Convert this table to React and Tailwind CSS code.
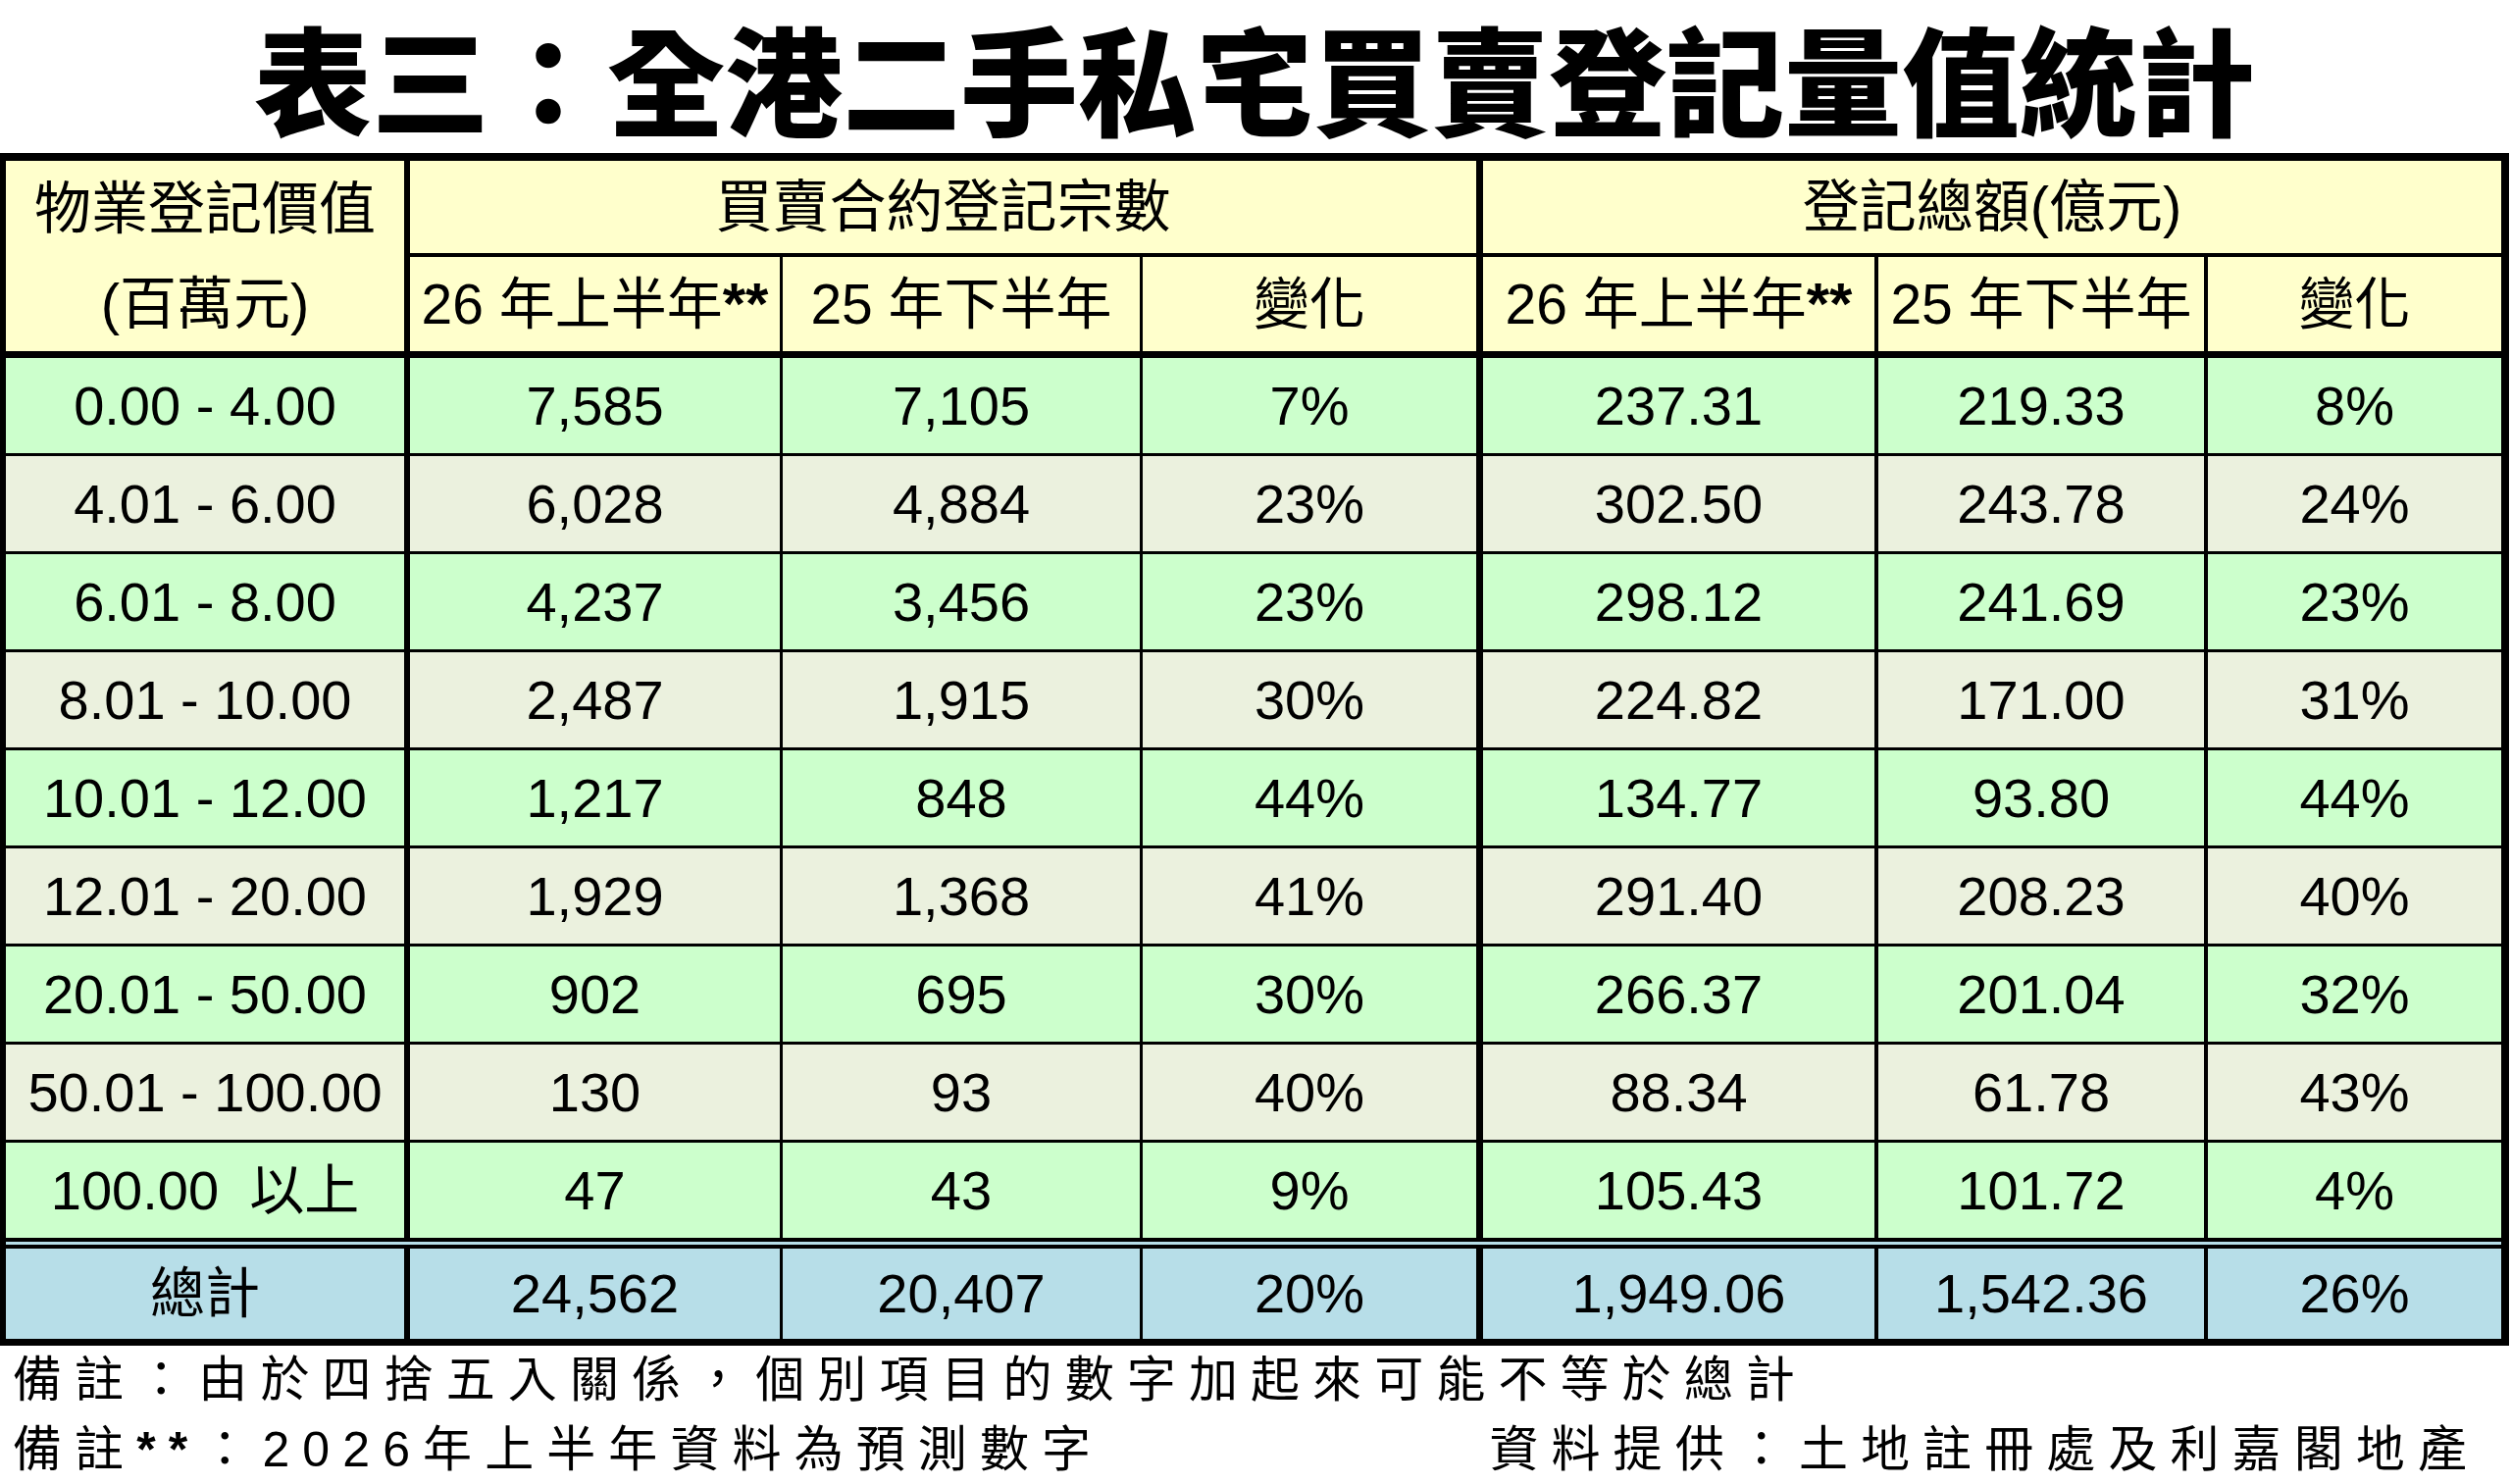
import React from 'react';

const font = { fontFamily: '"Liberation Sans", "Noto Sans CJK TC", sans-serif' };

// 每欄寬度（含右邊框）
const colClasses = [
  'w-[412px] border-r-[6px]',
  'w-[380px] border-r-[3px]',
  'w-[367px] border-r-[3px]',
  'w-[347px] border-r-[7px]',
  'w-[403px] border-r-[4px]',
  'w-[336px] border-r-[4px]',
  'w-[299px]',
];

const rows = [
  ['0.00 - 4.00', '7,585', '7,105', '7%', '237.31', '219.33', '8%'],
  ['4.01 - 6.00', '6,028', '4,884', '23%', '302.50', '243.78', '24%'],
  ['6.01 - 8.00', '4,237', '3,456', '23%', '298.12', '241.69', '23%'],
  ['8.01 - 10.00', '2,487', '1,915', '30%', '224.82', '171.00', '31%'],
  ['10.01 - 12.00', '1,217', '848', '44%', '134.77', '93.80', '44%'],
  ['12.01 - 20.00', '1,929', '1,368', '41%', '291.40', '208.23', '40%'],
  ['20.01 - 50.00', '902', '695', '30%', '266.37', '201.04', '32%'],
  ['50.01 - 100.00', '130', '93', '40%', '88.34', '61.78', '43%'],
  ['100.00  以上', '47', '43', '9%', '105.43', '101.72', '4%'],
];

const total = ['總計', '24,562', '20,407', '20%', '1,949.06', '1,542.36', '26%'];

const Cell = ({ cls, children }) => (
  <div className={`${cls} h-full shrink-0 flex items-center justify-center border-black whitespace-pre`}>
    {children}
  </div>
);

const DataRow = ({ data, bg, last }) => (
  <div className={`flex ${bg} ${last ? 'h-[97px]' : 'h-[100px] border-b-[3px] border-black'}`}>
    {data.map((v, i) => (
      <Cell key={i} cls={colClasses[i]}>{v}</Cell>
    ))}
  </div>
);

const Stars = () => <span className="font-bold text-[60px]">**</span>;

const App = () => {
  return (
    <div className="w-[2560px] min-h-[1513px] bg-white text-black" style={font}>
      {/* 標題 */}
      <div
        className="w-[2558px] h-[156px] flex items-center justify-center text-[120px] leading-[1.2] font-black"
        style={{ fontFamily: '"Noto Sans CJK TC", sans-serif' }}
      >
        表三：全港二手私宅買賣登記量值統計
      </div>

      {/* 表格 */}
      <div className="w-[2558px] border-l-[6px] border-r-[8px] border-t-[8px] border-b-[7px] border-black text-[56px] leading-none">
        {/* 表頭 */}
        <div className="flex bg-[#ffffcc] border-b-[7px] border-black">
          <div className="w-[412px] h-[194px] border-r-[6px] border-black flex flex-col">
            <div className="h-[98px] flex items-center justify-center text-[58px]">物業登記價值</div>
            <div className="h-[96px] flex items-center justify-center text-[58px]">(百萬元)</div>
          </div>
          <div className="w-[1094px] border-r-[7px] border-black flex flex-col">
            <div className="h-[98px] border-b-[4px] border-black flex items-center justify-center text-[58px]">
              買賣合約登記宗數
            </div>
            <div className="h-[96px] flex text-[57px]">
              <Cell cls="w-[380px] border-r-[3px]">26 年上半年<Stars /></Cell>
              <Cell cls="w-[367px] border-r-[3px]">25 年下半年</Cell>
              <Cell cls="flex-1">變化</Cell>
            </div>
          </div>
          <div className="w-[1038px] flex flex-col">
            <div className="h-[98px] border-b-[4px] border-black flex items-center justify-center text-[58px]">
              登記總額(億元)
            </div>
            <div className="h-[96px] flex text-[57px]">
              <Cell cls="w-[403px] border-r-[4px]">26 年上半年<Stars /></Cell>
              <Cell cls="w-[336px] border-r-[4px]">25 年下半年</Cell>
              <Cell cls="flex-1">變化</Cell>
            </div>
          </div>
        </div>

        {/* 數據 */}
        {rows.map((r, i) => (
          <DataRow
            key={i}
            data={r}
            bg={i % 2 === 0 ? 'bg-[#ccffcc]' : 'bg-[#ebf1de]'}
            last={i === rows.length - 1}
          />
        ))}

        {/* 總計 */}
        <div className="flex h-[103px] bg-[#b7dee8] border-t-[11px] border-double border-black">
          {total.map((v, i) => (
            <Cell key={i} cls={colClasses[i]}>{v}</Cell>
          ))}
        </div>
      </div>

      {/* 備註 */}
      <div className="w-[2558px] pl-[13px] pr-[30px] text-[50px] leading-[71px] tracking-[13.1px]">
        <div className="whitespace-nowrap">備註：由於四捨五入關係，個別項目的數字加起來可能不等於總計</div>
        <div className="flex justify-between whitespace-nowrap">
          <span>備註<span className="font-bold">**</span>：2026年上半年資料為預測數字</span>
          <span>資料提供：土地註冊處及利嘉閣地產</span>
        </div>
      </div>
    </div>
  );
};

export default App;
